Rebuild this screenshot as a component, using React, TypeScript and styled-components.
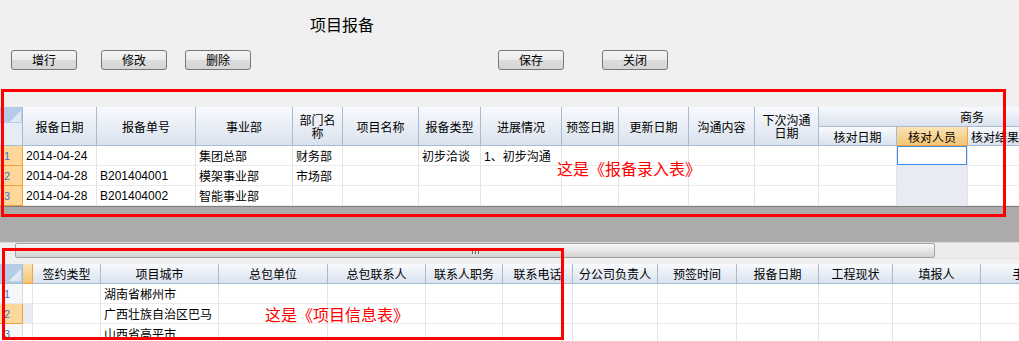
import React from 'react';
import styled, { createGlobalStyle, css } from 'styled-components';

const GlobalStyle = createGlobalStyle`
  html, body { margin: 0; padding: 0; background: #f0f0f0; }
  body {
    font-family: "Liberation Sans", "Noto Sans CJK SC", sans-serif;
    font-size: 12px;
    color: #000;
    overflow: hidden;
  }
`;

const Page = styled.div`
  position: relative;
  width: 1019px;
  height: 341px;
  overflow: hidden;
`;

const TitleBar = styled.div`
  height: 50px;
  box-sizing: border-box;
  padding: 16px 0 0 310px;
  font-family: "Noto Sans CJK SC", sans-serif;
  font-size: 16px;
  line-height: 17px;
`;

const Toolbar = styled.div`
  display: flex;
  height: 20px;
  padding-left: 11px;
`;

const Btn = styled.button<{ $ml?: number }>`
  width: 66px;
  height: 20px;
  margin: 0 0 0 ${p => p.$ml ?? 0}px;
  padding: 0;
  box-sizing: border-box;
  border: 1px solid #767676;
  border-radius: 3px;
  background: linear-gradient(#f4f4f4 0%, #ececec 50%, #dcdcdc 51%, #d6d6d6 100%);
  font-family: "Noto Sans CJK SC", sans-serif;
  font-size: 12px;
  line-height: 18px;
  color: #000;
`;

const GridWrap = styled.div<{ $mt?: number }>`
  margin-top: ${p => p.$mt ?? 0}px;
  width: 1019px;
  overflow: hidden;
`;

const Table = styled.table<{ $w: number }>`
  table-layout: fixed;
  border-collapse: separate;
  border-spacing: 0;
  width: ${p => p.$w}px;
`;

const Col = styled.col<{ $w: number }>`
  width: ${p => p.$w}px;
`;

const HeadRow = styled.tr<{ $h: number }>`
  height: ${p => p.$h}px;
`;

const Row = styled.tr`
  height: 20px;
`;

const Th = styled.th<{ $active?: boolean }>`
  padding: 0 3px;
  box-sizing: border-box;
  font-weight: normal;
  font-family: "Noto Sans CJK SC", sans-serif;
  font-size: 12px;
  line-height: 13px;
  text-align: center;
  vertical-align: middle;
  overflow: hidden;
  white-space: normal;
  border-right: 1px solid #a5bcd5;
  border-bottom: 1px solid #a5bcd5;
  background: linear-gradient(#f8fafd, #dae2ee);
  ${p =>
    p.$active &&
    css`
      background: linear-gradient(#fbe4b6, #f3c472);
      border-right-color: #f0a443;
      border-bottom-color: #f0a443;
    `}
`;

const NarrowTh = styled(Th)`
  white-space: nowrap;
  text-align: left;
`;

const GroupTh = styled(Th)`
  text-align: left;
  padding-left: 141px;
`;

const Corner = styled.th<{ $split?: boolean }>`
  padding: 0;
  vertical-align: top;
  border-right: 1px solid #a5bcd5;
  border-bottom: 1px solid #a5bcd5;
  background: ${p => (p.$split ? 'linear-gradient(#b5cce9 0 16px, #e6ecf5 16px)' : '#b5cce9')};
  svg { display: block; }
`;

const RowHead = styled.td<{ $active?: boolean }>`
  padding: 0 0 0 4px;
  font-family: "Liberation Sans", sans-serif;
  font-size: 11px;
  color: #3a74c0;
  border-right: 1px solid #d5dbe4;
  border-bottom: 1px solid #e3e6eb;
  background: #f6f7f9;
  ${p =>
    p.$active &&
    css`
      background: #fdd89a;
      border-right-color: #f1a040;
      border-bottom-color: #f1a040;
    `}
`;

type Tone = 'plain' | 'sel' | 'col';

const Td = styled.td<{ $tone?: Tone }>`
  padding: 0 0 0 3px;
  white-space: nowrap;
  overflow: hidden;
  font-size: 12px;
  border-right: 1px solid #e4e4e4;
  border-bottom: 1px solid #ebebeb;
  background: #fff;
  ${p =>
    p.$tone === 'col' &&
    css`
      background: #e8ebf3;
    `}
  ${p =>
    p.$tone === 'sel' &&
    css`
      box-shadow: inset 0 0 0 1px #3b8de4;
    `}
`;

const Splitter = styled.div`
  height: 35px;
  border-top: 1px solid #7e7e7e;
  background: #ababab;
`;

const HScroll = styled.div`
  display: flex;
  height: 22px;
  box-sizing: border-box;
  border-top: 1px solid #d8d8d8;
  background: #f0f0f0;
`;

const ScrollArrow = styled.div`
  width: 15px;
  height: 15px;
  display: flex;
  align-items: center;
  svg { display: block; }
`;

const Thumb = styled.div`
  width: 920px;
  height: 15px;
  box-sizing: border-box;
  border: 1px solid #a3a3a3;
  border-radius: 2px;
  background: linear-gradient(#f7f7f7, #e6e6e6 50%, #d2d2d2);
  display: flex;
  align-items: center;
  justify-content: center;
  svg { display: block; }
`;

const Track = styled.div`
  flex: 1;
  height: 15px;
  background: #ececec;
  border-bottom: 1px solid #e0e0e0;
`;

const RedBox = styled.div<{ $l: number; $t: number; $w: number; $h: number }>`
  position: absolute;
  left: ${p => p.$l}px;
  top: ${p => p.$t}px;
  width: ${p => p.$w}px;
  height: ${p => p.$h}px;
  box-sizing: border-box;
  border: 3px solid #ff0000;
  pointer-events: none;
`;

const Note = styled.div<{ $l: number; $t: number }>`
  position: absolute;
  left: ${p => p.$l}px;
  top: ${p => p.$t}px;
  font-family: "Noto Sans CJK SC", sans-serif;
  font-size: 16px;
  line-height: 16px;
  color: #ff0000;
  white-space: nowrap;
  pointer-events: none;
`;

const CornerMark = ({ h, pts }: { h: number; pts: string }) => (
  <svg width="22" height={h} viewBox={`0 0 22 ${h}`}>
    <defs>
      <linearGradient id={`cg${h}`} x1="0" y1="0" x2="1" y2="1">
        <stop offset="0" stopColor="#f4f7fb" />
        <stop offset="1" stopColor="#d9e2ee" />
      </linearGradient>
    </defs>
    <polygon points={pts} fill={`url(#cg${h})`} />
  </svg>
);

/* ---------- Grid 1 data ---------- */
const g1Widths = [74, 99, 97, 50, 76, 62, 81, 57, 70, 66, 64, 78, 71, 70, 85];
const g1Single = ['报备日期', '报备单号', '事业部', '部门名称', '项目名称', '报备类型', '进展情况', '预签日期', '更新日期', '沟通内容', '下次沟通日期'];
const g1Group = ['核对日期', '核对人员', '核对结果', '核对说明'];
const g1Rows = [
  ['2014-04-24', '', '集团总部', '财务部', '', '初步洽谈', '1、初步沟通', '', '', '', '', '', '', '', ''],
  ['2014-04-28', 'B201404001', '模架事业部', '市场部', '', '', '', '', '', '', '', '', '', '', ''],
  ['2014-04-28', 'B201404002', '智能事业部', '', '', '', '', '', '', '', '', '', '', '', ''],
];
const SEL_COL = 12;

/* ---------- Grid 2 data ---------- */
const g2Cols = [
  { w: 68, label: '签约类型' },
  { w: 118, label: '项目城市' },
  { w: 109, label: '总包单位' },
  { w: 98, label: '总包联系人' },
  { w: 77, label: '联系人职务' },
  { w: 70, label: '联系电话' },
  { w: 85, label: '分公司负责人' },
  { w: 79, label: '预签时间' },
  { w: 82, label: '报备日期' },
  { w: 74, label: '工程现状' },
  { w: 88, label: '填报人' },
  { w: 112, label: '手机号码' },
];
const g2Cities = ['湖南省郴州市', '广西壮族自治区巴马', '山西省高平市'];

const sum = (a: number[]) => a.reduce((x, y) => x + y, 0);

export default function App() {
  const g1Total = 23 + sum(g1Widths);
  const g2Total = 23 + 10 + sum(g2Cols.map(c => c.w));

  return (
    <Page>
      <GlobalStyle />
      <TitleBar>项目报备</TitleBar>
      <Toolbar>
        <Btn>增行</Btn>
        <Btn $ml={24}>修改</Btn>
        <Btn $ml={18}>删除</Btn>
        <Btn $ml={247}>保存</Btn>
        <Btn $ml={38}>关闭</Btn>
      </Toolbar>

      <GridWrap $mt={37}>
        <Table $w={g1Total}>
          <colgroup>
            <Col $w={23} />
            {g1Widths.map((w, i) => (
              <Col key={i} $w={w} />
            ))}
          </colgroup>
          <thead>
            <HeadRow $h={20}>
              <Corner rowSpan={2} $split>
                <CornerMark h={16} pts="21,4 21,15 10,15" />
              </Corner>
              {g1Single.map(l => (
                <Th key={l} rowSpan={2}>
                  {l}
                </Th>
              ))}
              <GroupTh colSpan={4}>商务</GroupTh>
            </HeadRow>
            <HeadRow $h={19}>
              {g1Group.map((l, i) =>
                i === 2 ? (
                  <NarrowTh key={l}>{l}</NarrowTh>
                ) : (
                  <Th key={l} $active={i === 1}>
                    {l}
                  </Th>
                )
              )}
            </HeadRow>
          </thead>
          <tbody>
            {g1Rows.map((r, ri) => (
              <Row key={ri}>
                <RowHead $active>{ri + 1}</RowHead>
                {r.map((c, ci) => (
                  <Td key={ci} $tone={ci === SEL_COL ? (ri === 0 ? 'sel' : 'col') : 'plain'}>
                    {c}
                  </Td>
                ))}
              </Row>
            ))}
          </tbody>
        </Table>
      </GridWrap>

      <Splitter />
      <HScroll>
        <ScrollArrow>
          <svg width="8" height="15" viewBox="0 0 8 15">
            <polygon points="5,5 2,7.5 5,10" fill="#555" />
          </svg>
        </ScrollArrow>
        <Thumb>
          <svg width="7" height="6" viewBox="0 0 7 6">
            <rect x="0" y="0" width="1" height="6" fill="#6a6a6a" />
            <rect x="3" y="0" width="1" height="6" fill="#6a6a6a" />
            <rect x="6" y="0" width="1" height="6" fill="#6a6a6a" />
          </svg>
        </Thumb>
        <Track />
      </HScroll>

      <GridWrap>
        <Table $w={g2Total}>
          <colgroup>
            <Col $w={23} />
            <Col $w={10} />
            {g2Cols.map((c, i) => (
              <Col key={i} $w={c.w} />
            ))}
          </colgroup>
          <thead>
            <HeadRow $h={20}>
              <Corner>
                <CornerMark h={19} pts="21,5 21,17 9,17" />
              </Corner>
              <Th $active />
              {g2Cols.map(c => (
                <Th key={c.label}>{c.label}</Th>
              ))}
            </HeadRow>
          </thead>
          <tbody>
            {g2Cities.map((city, ri) => (
              <Row key={ri}>
                <RowHead $active={ri === 1}>{ri + 1}</RowHead>
                <Td $tone={ri === 1 ? 'col' : 'plain'} />
                {g2Cols.map((c, ci) => (
                  <Td key={ci}>{ci === 1 ? city : ''}</Td>
                ))}
              </Row>
            ))}
          </tbody>
        </Table>
      </GridWrap>

      <RedBox $l={1} $t={89} $w={1005} $h={128} />
      <RedBox $l={2} $t={248} $w={562} $h={92} />
      <Note $l={557} $t={160}>这是《报备录入表》</Note>
      <Note $l={265} $t={306}>这是《项目信息表》</Note>
    </Page>
  );
}
